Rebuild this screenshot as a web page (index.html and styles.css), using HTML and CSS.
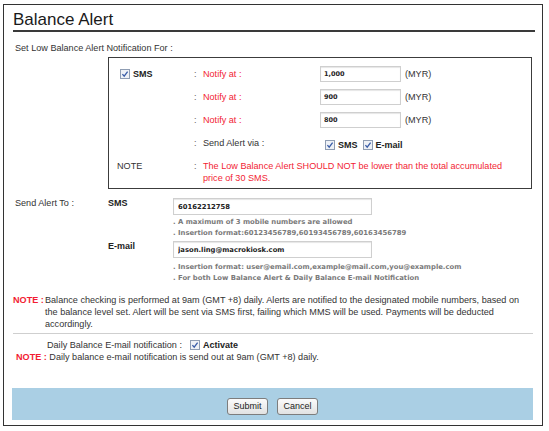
FILE: index.html
```html
<!DOCTYPE html>
<html>
<head>
<meta charset="utf-8">
<title>Balance Alert</title>
<link rel="stylesheet" href="styles.css">
</head>
<body>
<div class="panel">
  <h1 class="title">Balance Alert</h1>
  <div class="section-label">Set Low Balance Alert Notification For :</div>

  <div class="box">
    <div class="brow">
      <div class="ca"><span class="cb"><svg width="10" height="10" viewBox="0 0 10 10"><rect x="0.5" y="0.5" width="9" height="9" fill="#eef1f6" stroke="#8f9db3"/><path d="M2.4 5.1 L4.2 7.2 L7.6 2.6" fill="none" stroke="#3a5da8" stroke-width="1.3"/></svg></span><b class="bl">SMS</b></div>
      <div class="colon">:</div>
      <div class="red">Notify at :</div>
      <div><input class="inp-s" type="text" value="1,000"></div>
      <div class="unit">(MYR)</div>
    </div>
    <div class="brow">
      <div class="ca"></div>
      <div class="colon">:</div>
      <div class="red">Notify at :</div>
      <div><input class="inp-s" type="text" value="900"></div>
      <div class="unit">(MYR)</div>
    </div>
    <div class="brow">
      <div class="ca"></div>
      <div class="colon">:</div>
      <div class="red">Notify at :</div>
      <div><input class="inp-s" type="text" value="800"></div>
      <div class="unit">(MYR)</div>
    </div>
    <div class="brow via">
      <div class="ca"></div>
      <div class="colon">:</div>
      <div>Send Alert via :</div>
      <div class="checks">
        <span class="cb"><svg width="10" height="10" viewBox="0 0 10 10"><rect x="0.5" y="0.5" width="9" height="9" fill="#eef1f6" stroke="#8f9db3"/><path d="M2.4 5.1 L4.2 7.2 L7.6 2.6" fill="none" stroke="#3a5da8" stroke-width="1.3"/></svg></span><b class="bl">SMS</b>
        <span class="cb cb2"><svg width="10" height="10" viewBox="0 0 10 10"><rect x="0.5" y="0.5" width="9" height="9" fill="#eef1f6" stroke="#8f9db3"/><path d="M2.4 5.1 L4.2 7.2 L7.6 2.6" fill="none" stroke="#3a5da8" stroke-width="1.3"/></svg></span><b class="bl">E-mail</b>
      </div>
      <div></div>
    </div>
    <div class="brow note-row">
      <div class="ca note-l">NOTE</div>
      <div class="colon">:</div>
      <div class="red note-t">The Low Balance Alert SHOULD NOT be lower than the total accumulated price of 30 SMS.</div>
    </div>
  </div>

  <div class="sendto">
    <div class="st-label">Send Alert To :</div>
    <div class="st-sub"><b class="bl">SMS</b></div>
    <div class="st-field">
      <input class="inp-l" type="text" value="60162212758">
      <div class="hints hints1">
        <div>. A maximum of 3 mobile numbers are allowed</div>
        <div>. Insertion format:60123456789,60193456789,60163456789</div>
      </div>
    </div>
    <div class="st-label"></div>
    <div class="st-sub sub2"><b class="bl">E-mail</b></div>
    <div class="st-field">
      <input class="inp-l inp-mail" type="text" value="jason.ling@macrokiosk.com">
      <div class="hints hints2">
        <div>. Insertion format: user@email.com,example@mail.com,you@example.com</div>
        <div>. For both Low Balance Alert &amp; Daily Balance E-mail Notification</div>
      </div>
    </div>
  </div>

  <div class="note-para">
    <span class="note-tag">NOTE :</span>
    <span class="note-body">Balance checking is performed at 9am (GMT +8) daily. Alerts are notified to the designated mobile numbers, based on the balance level set. Alert will be sent via SMS first, failing which MMS will be used. Payments will be deducted accordingly.</span>
  </div>

  <div class="sep"></div>

  <div class="daily">Daily Balance E-mail notification : <span class="cb"><svg width="10" height="10" viewBox="0 0 10 10"><rect x="0.5" y="0.5" width="9" height="9" fill="#eef1f6" stroke="#8f9db3"/><path d="M2.4 5.1 L4.2 7.2 L7.6 2.6" fill="none" stroke="#3a5da8" stroke-width="1.3"/></svg></span><b class="act">Activate</b></div>
  <div class="note-line"><span class="note-tag2">NOTE :</span> <span>Daily balance e-mail notification is send out at 9am (GMT +8) daily.</span></div>

  <div class="actions">
    <button class="btn" type="button">Submit</button>
    <button class="btn" type="button">Cancel</button>
  </div>
</div>
</body>
</html>
```

FILE: styles.css
```css
* { box-sizing: border-box; }
html, body { margin: 0; padding: 0; background: #fff; }
body {
  font-family: "Liberation Sans", Arial, sans-serif;
  font-size: 9.1px;
  color: #333;
  width: 549px;
  height: 431px;
  overflow: hidden;
}
.panel {
  margin: 4px 0 0 3px;
  width: 540px;
  height: 422px;
  border: 1px solid #333;
}
.title {
  margin: 0 0 0 9px;
  width: 522px;
  padding-top: 5px;
  font-size: 17px;
  font-weight: normal;
  line-height: 20px;
  color: #1a1a1a;
  border-bottom: 2px solid #3a3a3a;
}
.section-label {
  margin: 9px 0 0 11px;
  line-height: 14px;
}
.box {
  margin: 2px 0 0 104px;
  width: 424px;
  border: 1px solid #3c3c3c;
  padding: 4px 8px 4px 8px;
}
.brow {
  display: grid;
  grid-template-columns: 76px 10px 117px 85px auto;
  height: 23px;
  align-items: center;
}
.ca { display: flex; align-items: center; padding-left: 3px; }
.cb { display: inline-flex; width: 10px; height: 10px; margin-right: 3px; vertical-align: middle; }
.cb svg { display: block; }
.bl { font-weight: bold; font-size: 9px; color: #222; }
.colon { color: #666; padding-left: 1px; }
.red { color: #f21d33; }
.unit { color: #333; }
.inp-s {
  display: block;
  width: 81px;
  height: 16px;
  border: 1px solid #cfcfcf;
  box-shadow: inset 0 1px 1px #e6e6e6;
  padding: 0 3px;
  font-family: "DejaVu Sans", Verdana, sans-serif;
  font-weight: bold;
  font-size: 6.5px;
  color: #222;
  outline: none;
}
.via .checks { display: flex; align-items: center; padding-left: 5px; padding-top: 4px; }
.cb2 { margin-left: 5px; }
.via { grid-template-columns: 76px 10px 117px auto 0; }
.note-row {
  height: auto;
  align-items: start;
  padding-top: 6px;
  line-height: 12px;
  grid-template-columns: 76px 10px 316px;
}
.note-l { padding-left: 0; color: #333; }

.sendto {
  display: grid;
  grid-template-columns: 93px 65px 280px;
  margin: 7px 0 0 11px;
}
.st-label, .st-sub { line-height: 14px; }
.inp-l {
  display: block;
  margin-top: 2px;
  width: 199px;
  height: 17px;
  border: 1px solid #cfcfcf;
  box-shadow: inset 0 1px 1px #e6e6e6;
  padding: 0 4px;
  font-family: "DejaVu Sans", Verdana, sans-serif;
  font-weight: bold;
  font-size: 6.8px;
  color: #222;
  outline: none;
}
.hints {
  font-family: "DejaVu Sans", Verdana, sans-serif;
  font-weight: bold;
  font-size: 6.85px;
  line-height: 11px;
  color: #7a7a7a;
  white-space: nowrap;
}
.hints1 { margin-top: 2px; }
.hints2 { margin-top: 4px; }

.note-para {
  display: flex;
  margin: 10px 0 0 9px;
  line-height: 12px;
}
.note-tag { width: 32px; flex: none; color: #f21d33; font-weight: bold; }
.note-body { width: 482px; color: #333; }
.sep {
  margin: 3px 0 0 9px;
  width: 520px;
  height: 1px;
  background: #cfcfcf;
}
.daily {
  margin: 5px 0 0 43px;
  line-height: 12px;
  display: flex;
  align-items: center;
}
.daily .cb { margin-left: 8px; }
.act { font-weight: bold; font-size: 9px; color: #222; }
.note-line {
  margin: 0 0 0 12px;
  line-height: 12px;
}
.note-tag2 { color: #f21d33; font-weight: bold; }
.actions {
  margin: 25px 0 0 8px;
  width: 521px;
  height: 32px;
  background: #aacfe4;
  display: flex;
  justify-content: center;
  align-items: center;
  gap: 9px;
  padding-top: 4px;
}
.btn {
  width: 41px;
  height: 17px;
  padding: 0;
  border: 1px solid #7d7d7d;
  border-radius: 3px;
  background: linear-gradient(#fbfbfb, #e2e2e2);
  font-family: "Liberation Sans", Arial, sans-serif;
  font-size: 9px;
  color: #222;
}
```
